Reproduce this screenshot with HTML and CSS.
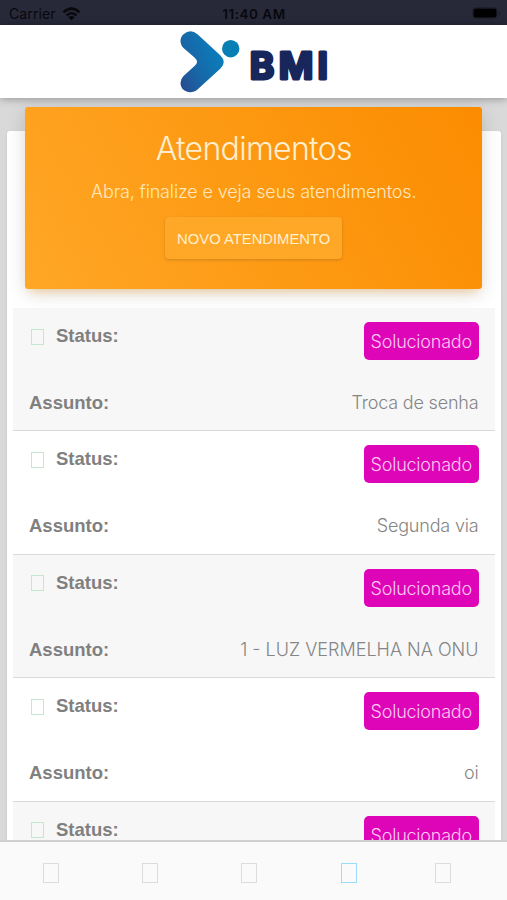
FILE: index.html
```html
<!DOCTYPE html>
<html lang="pt-BR">
<head>
<meta charset="utf-8">
<title>Atendimentos</title>
<link rel="stylesheet" href="styles.css">
</head>
<body>
<div class="app">
  <div class="statusbar">
    <div class="carrier"><span>Carrier</span>
      <svg width="19" height="14" viewBox="0 0 19 14"><g fill="none" stroke="#08080d" stroke-width="2.5"><path d="M1.500 5.300Q9.500-2 17.500 5.300"/><path d="M4.500 8.400Q9.500 4 14.500 8.400"/></g><path d="M6.300 10.200Q9.500 7.600 12.700 10.200L9.500 13.300Z" fill="#08080d"/></svg>
    </div>
    <div class="time">11:40 AM</div>
    <svg class="battery" width="29" height="12" viewBox="0 0 29 12"><rect x=".5" y=".5" width="25" height="11" rx="3" fill="none" stroke="#20202c"/><rect x="1.500" y="1.500" width="23" height="9" rx="2" fill="#000"/><path d="M27 4v4q2-2 0-4" fill="#181821"/></svg>
  </div>
  <header class="header">
    <svg class="logo" width="152" height="72" viewBox="178 26 152 72" role="img" aria-label="BMI">
      <defs><linearGradient id="g" x1="0" y1="1" x2="1" y2="0.35"><stop offset="0" stop-color="#294a8d"/><stop offset=".45" stop-color="#1768a8"/><stop offset="1" stop-color="#0a80bd"/></linearGradient></defs>
      <path d="M197.500 34.200L220.500 55.500Q227 62 220.500 68.500L197.500 89.600C191 95 180.500 91.500 180.500 83Q180.500 79 183.500 76L194.500 66Q199.500 62 194.500 57.500L183.500 48C179.500 44 179.500 37.500 183.500 34.200Q190.500 28.500 197.500 34.200Z" fill="url(#g)"/>
      <circle cx="230.700" cy="48.700" r="8.700" fill="#087fb4"/>
      <text class="logo-text" x="249.700 278.700 317.600" y="79">BMI</text>
    </svg>
  </header>
  <main class="content">
    <section class="card">
      <div class="banner">
        <h1>Atendimentos</h1>
        <p>Abra, finalize e veja seus atendimentos.</p>
        <button>NOVO ATENDIMENTO</button>
      </div>
      <div class="list">
        <div class="row"><div class="line"><div class="label"><i class="glyph"></i><b>Status:</b></div><span class="badge">Solucionado</span></div><div class="line subject"><b>Assunto:</b><span class="value">Troca de senha</span></div></div>
        <div class="row"><div class="line"><div class="label"><i class="glyph"></i><b>Status:</b></div><span class="badge">Solucionado</span></div><div class="line subject"><b>Assunto:</b><span class="value">Segunda via</span></div></div>
        <div class="row"><div class="line"><div class="label"><i class="glyph"></i><b>Status:</b></div><span class="badge">Solucionado</span></div><div class="line subject"><b>Assunto:</b><span class="value caps">1 - LUZ VERMELHA NA ONU</span></div></div>
        <div class="row"><div class="line"><div class="label"><i class="glyph"></i><b>Status:</b></div><span class="badge">Solucionado</span></div><div class="line subject"><b>Assunto:</b><span class="value">oi</span></div></div>
        <div class="row"><div class="line"><div class="label"><i class="glyph"></i><b>Status:</b></div><span class="badge">Solucionado</span></div></div>
      </div>
    </section>
  </main>
  <nav class="tabs"><i class="glyph"></i><i class="glyph"></i><i class="glyph"></i><i class="glyph active"></i><i class="glyph"></i></nav>
</div>
</body>
</html>
```
FILE: styles.css
```css
* { box-sizing: border-box; }
body { margin: 0; font-family: "Liberation Sans", sans-serif; }
.app { width: 507px; height: 900px; display: flex; flex-direction: column; overflow: hidden; background: #d9d9d9; }
.statusbar { flex: none; height: 25px; display: grid; grid-template-columns: 1fr auto 1fr; align-items: center; padding: 2px 6px 0 9px; background: #272838; color: #08080d; font: 14px Inter, sans-serif; }
.carrier { display: flex; align-items: center; gap: 6px; letter-spacing: .1px; }
.time { position: relative; left: -1px; font-weight: 600; font-size: 13.500px; letter-spacing: .5px; }
.battery { justify-self: end; margin-top: -2px; }
.header { flex: none; z-index: 2; height: 73.400px; display: flex; justify-content: center; padding-top: 1px; background: #fff; box-shadow: 0 1px 8px rgba(0,0,0,.32); }
.logo-text { font: 700 37px Inter, sans-serif; fill: #17265b; stroke: #17265b; stroke-width: 3px; stroke-linejoin: round; }
.content { flex: 1; min-height: 0; padding: 33px 6.500px 0 7px; }
.card { height: 760px; padding: 0 6px; background: #fff; border-radius: 3px; box-shadow: 0 1px 3px rgba(0,0,0,.1); }
.banner { position: relative; top: -24.400px; height: 182px; margin: 0 12.500px -5.400px 12.400px; padding-top: 24px; display: flex; flex-direction: column; align-items: center; border-radius: 3px; background: linear-gradient(60deg, #ffa726, #fb8c00); color: #ffefcf; box-shadow: 0 4px 20px rgba(0,0,0,.13), 0 7px 10px -5px rgba(255,152,0,.35); }
h1, p, .badge, .value { font-family: Inter, sans-serif; font-weight: 300; }
h1 { margin: 0; font-size: 32px; line-height: 36px; letter-spacing: -.7px; }
p { margin: 14px 0 0; font-size: 18px; line-height: 22px; letter-spacing: -.15px; color: #ffe8bd; }
button { margin-top: 13.500px; width: 177px; height: 42.500px; padding: 2px 0 0; border: 0; border-radius: 4px; background: #ffa726; color: #fff0cf; font: 14.800px "Liberation Sans", sans-serif; white-space: nowrap; box-shadow: 0 1px 3px rgba(150,100,40,.45); }
.list { position: relative; }
.row { height: 123.400px; padding: 14px 16px 0; border-bottom: 1.500px solid #dadada; color: #808080; }
.row:nth-child(odd) { background: #f7f7f7; }
.line { display: flex; justify-content: space-between; align-items: flex-start; height: 38px; }
.subject { margin-top: 32px; height: 22px; line-height: 22px; }
.label { display: flex; align-items: center; height: 28px; gap: 12px; padding-left: 1.500px; }
b { font-size: 18.500px; line-height: 22px; }
.row .glyph { width: 13.500px; height: 16px; border: 1px solid #c5e7d2; margin-top: 1px; }
.badge { width: 114.500px; height: 38px; display: flex; align-items: center; justify-content: center; padding-top: 1px; border-radius: 5px; background: #de05b8; color: #ffc9f4; font-size: 18px; letter-spacing: -.22px; }
.value { font-size: 18px; color: #858585; letter-spacing: -.18px; white-space: nowrap; }
.value.caps { letter-spacing: 0; }
.tabs { flex: none; z-index: 2; height: 60.500px; border-top: 2px solid #d0d0d0; background: #fafafa; display: grid; grid-template-columns: 99px 99.500px 99.500px 94.500px 16px; align-items: center; padding: 4px 0 0 42.500px; }
.tabs .glyph { width: 16px; height: 19.500px; border: 1px solid #dcdcdc; }
.tabs .glyph.active { border-color: #9bdcfa; }
```
